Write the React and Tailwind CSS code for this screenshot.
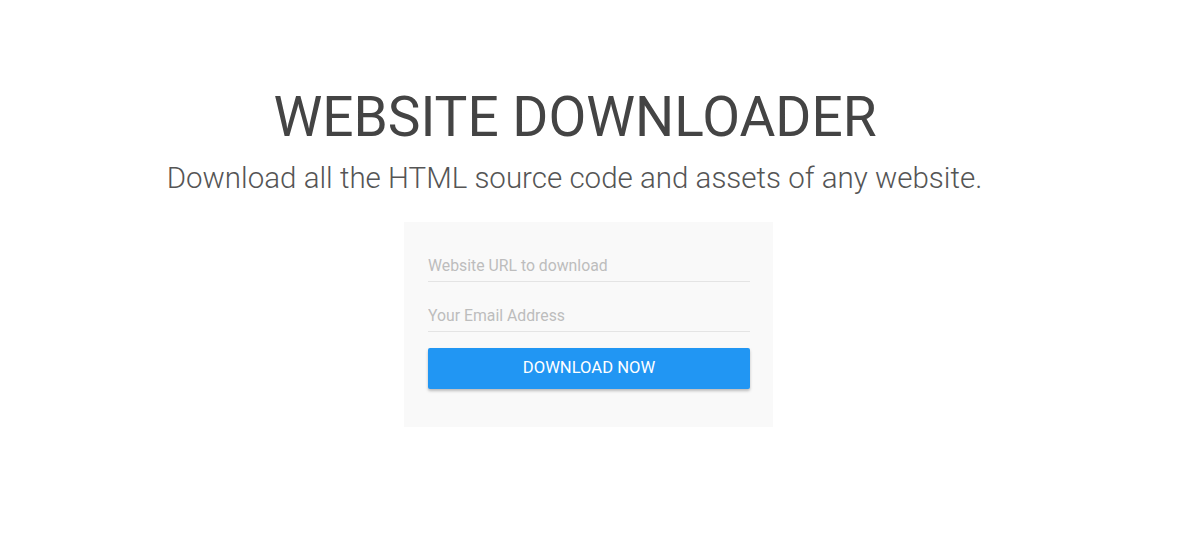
export default function App() {
  return (
    <div className="min-h-[552px] w-[1200px] bg-white font-['Roboto',sans-serif]">
      <div className="flex flex-col items-center pt-[83px]">
        <h1 className="ml-[-50px] text-[55px] font-normal leading-[68px] text-[#444]">WEBSITE DOWNLOADER</h1>
        <p className="ml-[-51px] mt-[9px] text-[29.5px] font-light leading-[36px] text-[#555]">
          Download all the HTML source code and assets of any website.
        </p>
        <form className="ml-[-23px] mt-[26px] flex w-[369px] flex-col bg-[#f9f9f9] pb-[38px] pl-[24px] pr-[23px] pt-[28px]">
          <input
            type="text"
            placeholder="Website URL to download"
            className="h-[32px] border-b border-[#e4e4e4] bg-transparent text-[15.8px] text-[#444] outline-none placeholder:text-[#bdbdbd]"
          />
          <input
            type="email"
            placeholder="Your Email Address"
            className="mt-[18px] h-[32px] border-b border-[#e4e4e4] bg-transparent text-[15.8px] text-[#444] outline-none placeholder:text-[#bdbdbd]"
          />
          <button
            type="button"
            className="mt-[16px] h-[41px] rounded-[2px] bg-[#2196f3] text-[16.6px] text-white shadow-[0_2px_3px_rgba(0,0,0,0.25)]"
          >
            DOWNLOAD NOW
          </button>
        </form>
      </div>
    </div>
  );
}
